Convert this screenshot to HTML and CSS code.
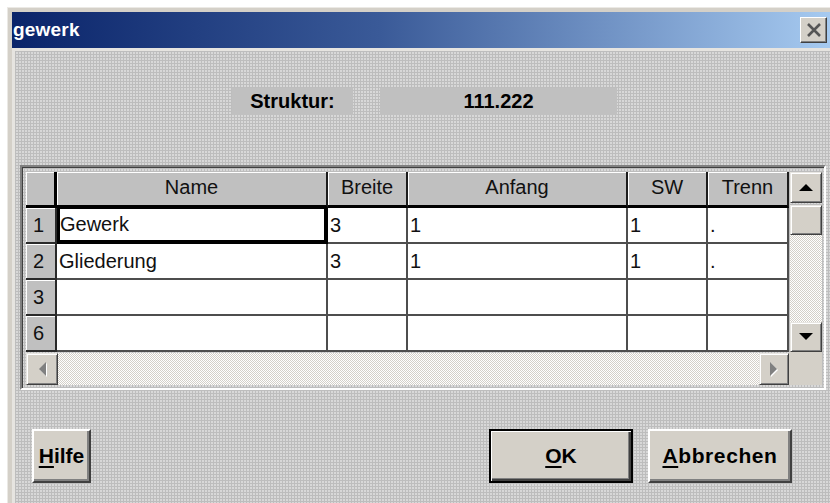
FILE: index.html
```html
<!DOCTYPE html>
<html lang="de">
<head>
<meta charset="utf-8">
<title>gewerk</title>
<link rel="stylesheet" href="styles.css">
</head>
<body>
<div class="window">
  <div class="titlebar">
    <span class="title">gewerk</span>
    <button class="close" aria-label="Schließen">
      <svg width="16" height="14" viewBox="0 0 16 14"><path d="M2 1 L14 13 M14 1 L2 13" stroke="#555" stroke-width="2.6" fill="none"/></svg>
    </button>
  </div>
  <div class="client">
    <div class="struct-row">
      <div class="field label">Struktur:</div>
      <div class="field value">111.222</div>
    </div>

    <div class="gridframe">
      <div class="gridbox">
        <div class="table">
          <div class="cell hd corner-cell"></div>
          <div class="cell hd">Name</div>
          <div class="cell hd">Breite</div>
          <div class="cell hd">Anfang</div>
          <div class="cell hd">SW</div>
          <div class="cell hd">Trenn</div>

          <div class="cell rh">1</div>
          <div class="cell focus">Gewerk</div>
          <div class="cell">3</div>
          <div class="cell">1</div>
          <div class="cell">1</div>
          <div class="cell">.</div>

          <div class="cell rh">2</div>
          <div class="cell">Gliederung</div>
          <div class="cell">3</div>
          <div class="cell">1</div>
          <div class="cell">1</div>
          <div class="cell">.</div>

          <div class="cell rh">3</div>
          <div class="cell"></div>
          <div class="cell"></div>
          <div class="cell"></div>
          <div class="cell"></div>
          <div class="cell"></div>

          <div class="cell rh">6</div>
          <div class="cell"></div>
          <div class="cell"></div>
          <div class="cell"></div>
          <div class="cell"></div>
          <div class="cell"></div>
        </div>

        <div class="vscroll">
          <div class="sbtn up"><svg width="14" height="8" viewBox="0 0 14 8"><polygon points="7,0 14,7 0,7" fill="#000"/></svg></div>
          <div class="sbtn thumb"></div>
          <div class="track"></div>
          <div class="sbtn down"><svg width="14" height="8" viewBox="0 0 14 8"><polygon points="0,0 14,0 7,7" fill="#000"/></svg></div>
        </div>

        <div class="hscroll">
          <div class="sbtn left"><svg width="9" height="16" viewBox="0 0 9 16"><polygon points="8,1 8,15 1,8" fill="#fff" transform="translate(1,1)"/><polygon points="8,1 8,15 1,8" fill="#808080"/></svg></div>
          <div class="track"></div>
          <div class="sbtn right"><svg width="9" height="16" viewBox="0 0 9 16"><polygon points="0,1 0,15 7,8" fill="#fff" transform="translate(1,1)"/><polygon points="0,1 0,15 7,8" fill="#808080"/></svg></div>
        </div>

        <div class="corner"></div>
      </div>
    </div>

    <div class="actions">
      <button class="btn help"><u>H</u>ilfe</button>
      <button class="btn ok default"><u>O</u>K</button>
      <button class="btn cancel"><u>A</u>bbrechen</button>
    </div>
  </div>
</div>
</body>
</html>
```
FILE: styles.css
```css
html, body {
  margin: 0;
  padding: 0;
}

body {
  width: 830px;
  height: 503px;
  overflow: hidden;
  background: #fff;
  font-family: "Liberation Sans", Arial, sans-serif;
  color: #000;
}

/* Window frame */
.window {
  box-sizing: border-box;
  margin: 7px 0 0 7px;
  width: 823px;
  height: 496px;
  padding: 4px 0 0 4px;
  background: #d4d0c8;
  border-top: 1px solid #ebe9e5;
  border-left: 1px solid #ebe9e5;
  display: flex;
  flex-direction: column;
}

.titlebar {
  height: 36px;
  flex: none;
  display: flex;
  align-items: center;
  background: linear-gradient(to right, #0a246a 0%, #3a5a98 45%, #a6caf0 100%);
}

.title {
  color: #fff;
  font-weight: bold;
  font-size: 19px;
  padding-left: 1px;
  letter-spacing: 0.2px;
}

.close {
  margin-left: auto;
  margin-right: 3px;
  width: 27px;
  height: 26px;
  padding: 0;
  display: flex;
  align-items: center;
  justify-content: center;
  background: #d4d0c8;
  border: 1px solid;
  border-color: #fff #404040 #404040 #fff;
  box-shadow: inset -1px -1px #808080;
}

/* Dialog client area with its dotted fill */
.client {
  flex: 1;
  border-top: 3px solid #e6e4e0;
  border-left: 3px solid #e6e4e0;
  padding-left: 5px;
  background-color: #d8d8d8;
  background-image:
    linear-gradient(90deg, #bdbdbd 1px, transparent 1px),
    linear-gradient(#bdbdbd 1px, transparent 1px);
  background-size: 3px 3px;
  display: flex;
  flex-direction: column;
}

.struct-row {
  margin-top: 37px;
  margin-left: 212px;
  display: flex;
  gap: 27px;
}

.field {
  height: 27px;
  background: #c0c0c0;
  display: flex;
  align-items: center;
  justify-content: center;
  font-weight: bold;
  font-size: 20px;
}

.label { width: 121px; }
.value { width: 237px; }

/* Grid control */
.gridframe {
  margin-top: 50px;
  width: 806px;
  box-sizing: border-box;
  border: 2px solid;
  border-color: #808080 #fff #fff #808080;
  box-shadow: inset 1px 1px #404040;
  padding: 5px 2px 3px 4px;
}

.gridbox {
  display: grid;
  grid-template-columns: 763px 33px;
  grid-template-rows: 180px 33px;
}

.table {
  display: grid;
  grid-template-columns: 31px 271px 80px 220px 80px 81px;
  grid-auto-rows: 36px;
  background: #fff;
}

.cell {
  box-sizing: border-box;
  border-right: 2px solid #4e4e4e;
  border-bottom: 2px solid #4e4e4e;
  background: #fff;
  display: flex;
  align-items: center;
  padding-left: 2px;
  font-size: 20px;
  color: #111;
  white-space: nowrap;
  overflow: hidden;
}

.hd {
  background: #c0c0c0;
  justify-content: center;
  padding: 0 0 2px;
  border-right-color: #1c1c1c;
  border-bottom: 3px solid #000;
  box-shadow: inset 1px 1px #fff;
}

.corner-cell {
  border-right: 3px solid #000;
}

.rh {
  background: #c0c0c0;
  justify-content: center;
  padding: 0 4px 0 0;
  border-right-color: #2a2a2a;
  border-bottom-color: #2a2a2a;
  box-shadow: inset 1px 1px #fff;
}

.focus {
  box-shadow: inset 3px 0 #000, inset 0 0 0 1px #000;
  border-right: 3px solid #000;
  border-bottom: 3px solid #000;
  padding-left: 3px;
}

/* Scrollbars */
.sbtn {
  box-sizing: border-box;
  background: #d4d0c8;
  border: 1px solid;
  border-color: #e8e6e2 #404040 #404040 #e8e6e2;
  box-shadow: inset 1px 1px #fff, inset -1px -1px #808080;
  display: flex;
  align-items: center;
  justify-content: center;
  flex: none;
}

.track {
  flex: 1;
  background: repeating-conic-gradient(#d4d0c8 0 25%, #fff 0 50%) 0 0 / 2px 2px;
}

.vscroll {
  display: flex;
  flex-direction: column;
  padding-left: 1px;
}

.vscroll .sbtn { width: 32px; }
.vscroll .up { height: 31px; }
.vscroll .thumb { height: 30px; margin-top: 2px; }
.vscroll .down { height: 30px; }

.hscroll {
  display: flex;
  padding-top: 1px;
}

.hscroll .sbtn { height: 32px; }
.hscroll .left { width: 32px; }
.hscroll .right { width: 30px; }

.corner {
  background: #d4d0c8;
}

/* Command buttons */
.actions {
  margin-top: 39px;
  margin-left: 12px;
  width: 760px;
  display: flex;
  gap: 15px;
}

.btn {
  box-sizing: border-box;
  height: 54px;
  padding: 0;
  background: #d4d0c8;
  border: 2px solid;
  border-color: #fff #404040 #404040 #fff;
  box-shadow: inset -2px -2px #808080;
  font-family: "Liberation Sans", Arial, sans-serif;
  font-weight: bold;
  font-size: 21px;
  color: #000;
}

.btn u {
  text-decoration-thickness: 2px;
  text-underline-offset: 3px;
}

.help { width: 59px; }
.ok { width: 144px; margin-left: auto; }
.cancel { width: 144px; letter-spacing: 0.6px; }

.default {
  border: 2px solid #000;
  box-shadow: inset 1px 1px #fff, inset -2px -2px #404040, inset -3px -3px #808080;
}
```
